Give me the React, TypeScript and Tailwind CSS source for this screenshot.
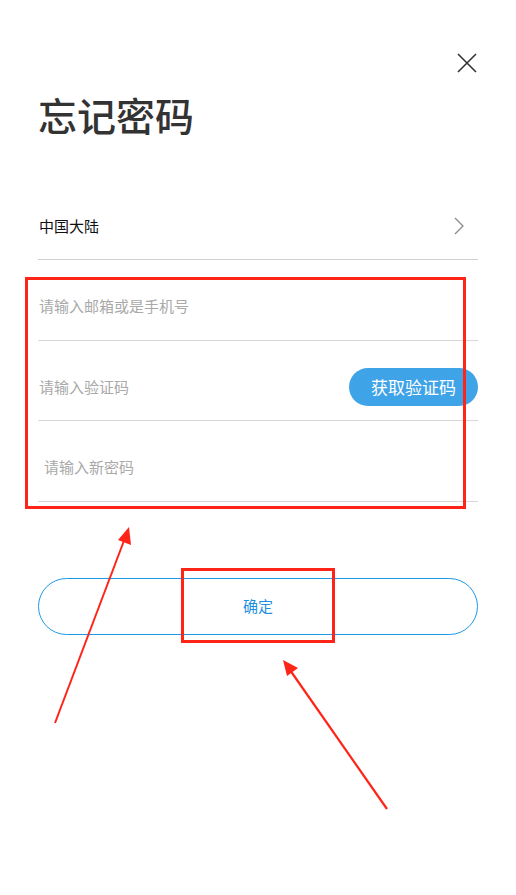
import React from 'react';

const font = { fontFamily: '"Noto Sans CJK SC", "Noto Sans", sans-serif' };

function Field({ placeholder, indent, tall, children }: { placeholder: string; indent?: boolean; tall?: boolean; children?: React.ReactNode }) {
  return (
    <div className={`flex items-center border-b border-[#d6d6d6] pt-[13px] ${tall ? 'h-[81px]' : 'h-[80px]'}`}>
      <input
        className={`flex-1 bg-transparent text-[15px] text-[#333] outline-none placeholder:text-[#a9a9a9] ${indent ? 'pl-[6px]' : 'pl-[1px]'}`}
        placeholder={placeholder}
      />
      {children}
    </div>
  );
}

export default function App() {
  return (
    <div className="relative h-[895px] w-[516px] overflow-hidden bg-white" style={font}>
      <div className="flex justify-end pr-[39px] pt-[53px]">
        <svg width="20" height="20" viewBox="0 0 20 20" stroke="#333" strokeWidth="1.6" fill="none">
          <path d="M1 1 L19 19 M19 1 L1 19" />
        </svg>
      </div>

      <div className="px-[38px]">
        <h1 className="mt-[21px] text-[39px] font-medium leading-[40px] text-[#333]">忘记密码</h1>

        <div className="mt-[46px] flex h-[80px] items-center justify-between border-b border-[#d0d0d0] pt-[13px]">
          <span className="pl-[1px] text-[15px] text-[#111]">中国大陆</span>
          <svg width="10" height="18" viewBox="0 0 10 18" stroke="#8a8a8a" strokeWidth="1.3" fill="none" className="mr-[14px]">
            <path d="M1 1 L9 9 L1 17" />
          </svg>
        </div>

        <Field placeholder="请输入邮箱或是手机号" tall />
        <Field placeholder="请输入验证码">
          <button className="h-[38px] w-[129px] rounded-full bg-[#3fa3e7] text-[17px] text-white">获取验证码</button>
        </Field>
        <Field placeholder="请输入新密码" indent tall />

        <button className="mt-[76px] h-[57px] w-full rounded-full border-[1.5px] border-[#1d9ae6] text-[15px] text-[#1d8fe0]">
          确定
        </button>
      </div>

      {/* annotations */}
      <div className="pointer-events-none absolute left-[25px] top-[277px] h-[232px] w-[441px] border-[3px] border-[#ff2418]" />
      <div className="pointer-events-none absolute left-[181px] top-[568px] h-[75px] w-[154px] border-[3px] border-[#ff2418]" />
      <svg className="pointer-events-none absolute left-0 top-0" width="516" height="895" viewBox="0 0 516 895">
        <line x1="55" y1="723" x2="125" y2="538" stroke="#ff2418" strokeWidth="2" />
        <polygon points="129,527 131,545 118,540" fill="#ff2418" />
        <line x1="387" y1="809" x2="290" y2="670" stroke="#ff2418" strokeWidth="2.2" />
        <polygon points="283,660 298,668 287,676" fill="#ff2418" />
      </svg>
    </div>
  );
}
